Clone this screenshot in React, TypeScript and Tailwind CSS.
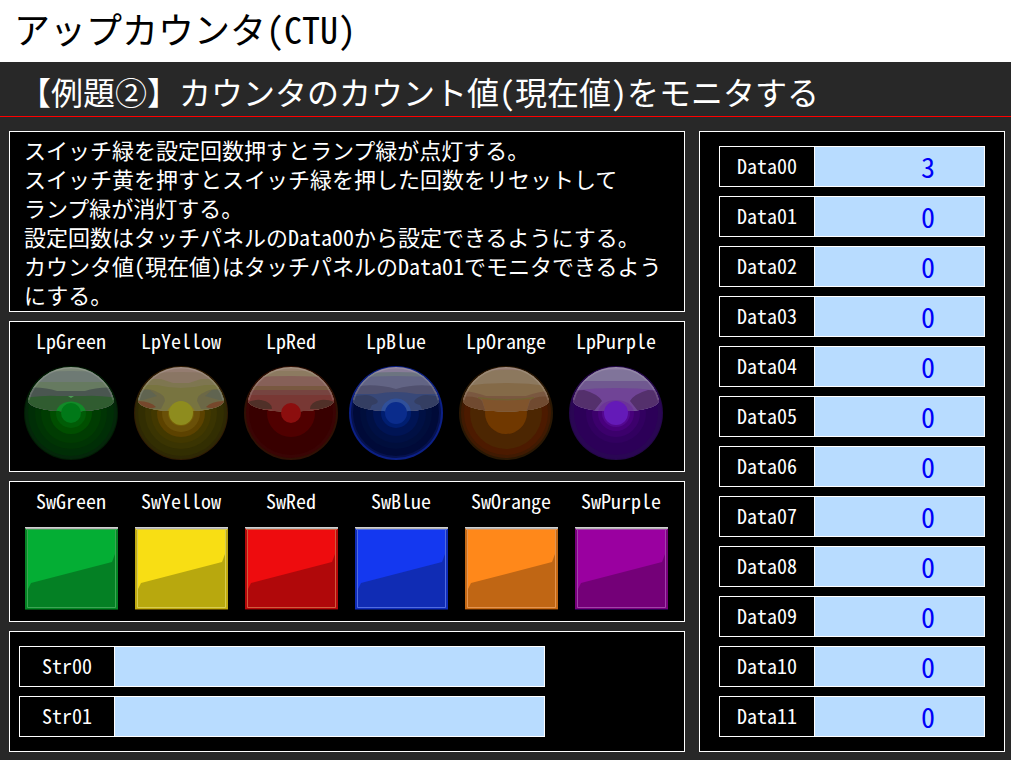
import { ReactNode, useState } from "react";

const description = [
  "スイッチ緑を設定回数押すとランプ緑が点灯する。",
  "スイッチ黄を押すとスイッチ緑を押した回数をリセットして",
  "ランプ緑が消灯する。",
  "設定回数はタッチパネルのData00から設定できるようにする。",
  "カウンタ値(現在値)はタッチパネルのData01でモニタできるようにする。",
];

type Ring = [radius: number, color: string];
type Band = [path: string, color: string];

type LampSpec = {
  name: string;
  width: string;
  rings: Ring[];
  bands: Band[];
  core: Ring;
};

// rings go from the outside in, bands are the reflections on the upper half
const lamps: LampSpec[] = [
  {
    name: "LpGreen",
    width: "w-[110px]",
    rings: [[47, "#021c04"], [46, "#04260a"], [43, "#002e06"], [36, "#003404"], [30, "#003c02"], [21, "#004e00"], [15, "#005c06"]],
    bands: [
      ["M0 0H96V48H0Z", "#7c8878"],
      ["M0 8Q48 4 96 8V48H0Z", "#6e7a74"],
      ["M0 17H96V48H0Z", "#667a60"],
      ["M0 23Q20 21 34 26H62Q76 21 96 23V48H0Z", "#4a5650"],
      ["M0 33Q22 30 34 31H62Q74 30 96 33V48H0Z", "#305c30"],
      ["M33 47C36 33 60 33 63 47Z", "#128a28"],
      ["M45 31H51L48 33Z", "#4c9c54"],
    ],
    core: [10, "#007818"],
  },
  {
    name: "LpYellow",
    width: "w-[110px]",
    rings: [[47, "#301c04"], [46, "#2e2804"], [43, "#322e02"], [36, "#3a3402"], [30, "#423800"], [24, "#5c4200"], [19, "#6a5008"], [13, "#786008"]],
    bands: [
      ["M0 0H96V48H0Z", "#947c70"],
      ["M0 9Q48 5 96 9V48H0Z", "#8a7664"],
      ["M0 14H28L40 18H56L68 14H96V48H0Z", "#7e7650"],
      ["M0 20H24Q48 26 72 20H96V48H0Z", "#787440"],
      ["M0 25Q17 22 24 27Q32 30 32 36L28 44H0ZM96 25Q79 22 72 27Q64 30 64 36L68 44H96Z", "#6c6846"],
      ["M0 32Q7 23 17 25L24 31L10 35H0ZM96 32Q89 23 79 25L72 31L86 35H96Z", "#606450"],
      ["M0 36Q17 35 23 42Q20 44 0 44ZM96 36Q79 35 73 42Q76 44 96 44Z", "#76482c"],
      ["M34 47C36 36 60 36 62 47Z", "#8a7c24"],
    ],
    core: [12, "#8e8c1e"],
  },
  {
    name: "LpRed",
    width: "w-[110px]",
    rings: [[47, "#301004"], [45, "#3a0404"], [42, "#380000"], [24, "#500000"]],
    bands: [
      ["M0 0H96V48H0Z", "#96806c"],
      ["M0 6H96V48H0Z", "#8c7a60"],
      ["M0 13Q48 9 96 13V48H0Z", "#866058"],
      ["M0 21H96V48H0Z", "#785840"],
      ["M0 25H96V48H0Z", "#764440"],
      ["M0 30H96V48H0Z", "#783834"],
      ["M0 40Q8 34 18 35Q29 37 29 44H0ZM96 40Q88 34 78 35Q67 37 67 44H96Z", "#503028"],
    ],
    core: [10, "#8c0e0e"],
  },
  {
    name: "LpBlue",
    width: "w-[100px]",
    rings: [[47, "#0c2086"], [45, "#06124e"], [43, "#000a38"], [36, "#000e3c"], [30, "#001044"], [23, "#001454"], [15, "#001e70"]],
    bands: [
      ["M0 0H96V48H0Z", "#887c98"],
      ["M0 9Q48 5 96 9V48H0Z", "#6c7480"],
      ["M0 13Q48 9 96 13V48H0Z", "#626484"],
      ["M0 23Q24 17 48 24Q72 17 96 23V48H0Z", "#50506e"],
      ["M0 29H28Q48 25 68 29H96V48H0Z", "#384878"],
      ["M0 33Q18 28 23 31Q36 37 24 40L20 48H0ZM96 33Q78 28 73 31Q60 37 72 40L76 48H96Z", "#343e62"],
      ["M33 47C35 29 61 29 63 47Z", "#30509a"],
    ],
    core: [11, "#0a2c8c"],
  },
  {
    name: "LpOrange",
    width: "w-[120px]",
    rings: [[47, "#2a1804"], [45, "#401a02"], [42, "#4c1a00"], [36, "#4c2602"], [21, "#703800"]],
    bands: [
      ["M0 0H96V48H0Z", "#92786c"],
      ["M0 7Q48 3 96 7V48H0Z", "#8c785e"],
      ["M0 22Q48 14 96 22V48H0Z", "#846a48"],
      ["M0 26Q12 25 28 31H68Q84 25 96 26V48H0Z", "#7a5840"],
      ["M20 32Q48 36 76 32V34Q48 37 20 34Z", "#706030"],
      ["M0 32Q20 30 24 36L28 48H0ZM96 32Q76 30 72 36L68 48H96Z", "#704a30"],
      ["M24 34Q48 37 72 34L68 48H28Z", "#80542c"],
    ],
    core: [0, "#703800"],
  },
  {
    name: "LpPurple",
    width: "w-[100px]",
    rings: [[47, "#240848"], [46, "#2a0654"], [42, "#2c0058"], [30, "#320060"], [24, "#3c006c"], [18, "#48007c"], [14, "#540890"]],
    bands: [
      ["M0 0H96V48H0Z", "#8878a0"],
      ["M0 8Q48 2 96 8V48H0Z", "#80749a"],
      ["M0 16H96V48H0Z", "#705890"],
      ["M0 26Q48 20 96 26V48H0Z", "#704496"],
      ["M0 26L16 25Q30 29 34 36L26 46H0ZM96 26L80 25Q66 29 62 36L70 46H96Z", "#54306c"],
      ["M30 47C32 31 64 31 66 47Z", "#6c3498"],
    ],
    core: [12, "#641ab8"],
  },
];

const switches = [
  { name: "SwGreen", light: "#04ae34", dark: "#048024", edge: "#048424", line: "#3ca454", bottom: "#004c10" },
  { name: "SwYellow", light: "#f8de14", dark: "#b8a80e", edge: "#c0aa10", line: "#d8cc50", bottom: "#5c4800" },
  { name: "SwRed", light: "#ee0c0e", dark: "#b0080a", edge: "#b4080a", line: "#d05c3c", bottom: "#4c0000" },
  { name: "SwBlue", light: "#1438f0", dark: "#102cb4", edge: "#102cb8", line: "#506ce0", bottom: "#041464" },
  { name: "SwOrange", light: "#ff881a", dark: "#c06614", edge: "#c46814", line: "#e49450", bottom: "#502400" },
  { name: "SwPurple", light: "#9a00a0", dark: "#740078", edge: "#78007c", line: "#a044a8", bottom: "#240048" },
];

const Panel = ({ className, children }: { className?: string; children: ReactNode }) => (
  <section className={`border border-white bg-black ${className ?? ""}`}>{children}</section>
);

const GLOSS = "M5 35A44.500 44.500 0 0 1 91 35C91 43 70 46.500 48 46.500S5 43 5 35Z";

const Lamp = ({ lamp }: { lamp: LampSpec }) => {
  const { name, rings, bands, core } = lamp;
  return (
    <svg className="size-24" viewBox="0 0 96 96" role="img" aria-label={name}>
      <defs>
        <clipPath id={`gloss-${name}`}>
          <path d={GLOSS} />
        </clipPath>
      </defs>
      {rings.map(([r, color]) => (
        <circle key={r} cx="48" cy="48" r={r} fill={color} />
      ))}
      <g clipPath={`url(#gloss-${name})`}>
        {bands.map(([path, color]) => (
          <path key={path} d={path} fill={color} />
        ))}
        <path d="M5 35A44.500 44.500 0 0 1 91 35" fill="none" stroke="#d8d0d0" strokeOpacity="0.2" strokeWidth="3" />
      </g>
      <circle cx="48" cy="48" r={core[0]} fill={core[1]} />
    </svg>
  );
};

const SwitchFace = ({ sw }: { sw: (typeof switches)[number] }) => (
  <svg className="block" width="93" height="83" viewBox="0 0 93 83" aria-hidden="true">
    <path d="M0 0H93V83H0Z" fill={sw.edge} />
    <path d="M3 3H90V80H3Z" fill={sw.light} />
    <path d="M3 80V62L6 56L87 35L90 27V80Z" fill={sw.dark} />
    <path d="M2.500 3V80.500H90.500V3" fill="none" stroke={sw.line} />
    <path d="M0 0H93V1H0Z" fill="#d0d0d0" />
    <path d="M0 1H93V2H1Z" fill="#b4b4b4" />
    <path d="M1 2H92V3H1Z" fill={sw.line} />
    <path d="M0 82H93V83H0Z" fill={sw.bottom} />
  </svg>
);

const Field = ({ label, value, onChange }: { label: string; value: string; onChange: (v: string) => void }) => (
  <div className="flex h-[41px] border border-white">
    <label
      htmlFor={label}
      className="flex w-[95px] shrink-0 items-center justify-center border-r border-white pb-0.5 text-xl"
    >
      {label}
    </label>
    <input
      id={label}
      value={value}
      onChange={(e) => onChange(e.target.value)}
      className="h-full w-full min-w-0 bg-[#b8dcff] pr-[49px] pb-0.5 text-right text-[28px] text-[#0000f8] outline-none"
    />
  </div>
);

const App = () => {
  const [data, setData] = useState(["3", ...Array<string>(11).fill("0")]);
  const [strings, setStrings] = useState(["", ""]);

  const replaceAt = (list: string[], index: number, value: string) =>
    list.map((item, i) => (i === index ? value : item));

  return (
    <div className="min-h-screen bg-[#282828] font-['Noto_Sans_CJK_JP',sans-serif] text-white [font-feature-settings:'hwid']">
      <header>
        <h1 className="h-[62px] bg-white pl-[14px] text-4xl leading-[56px] text-black">アップカウンタ(CTU)</h1>
        <h2 className="h-[55px] border-b border-[#ff0000] pl-[19px] text-[32px] leading-[58px]">
          【例題②】カウンタのカウント値(現在値)をモニタする
        </h2>
      </header>

      <main className="grid grid-cols-[minmax(0,1fr)_306px] gap-[14px] pt-[14px] pr-[6px] pb-2 pl-[9px]">
        <div className="flex flex-col gap-[9px]">
          <Panel className="px-[14px] pt-[3px] pb-[2px] text-[22px] leading-[29px]">
            {description.map((line) => (
              <p key={line}>{line}</p>
            ))}
          </Panel>

          {/* Lamps */}
          <Panel className="flex h-[151px] px-[6px] pt-[3px]">
            {lamps.map((lamp) => (
              <div key={lamp.name} className={`flex flex-col items-center gap-2 ${lamp.width}`}>
                <span className="text-xl leading-8">{lamp.name}</span>
                <Lamp lamp={lamp} />
              </div>
            ))}
          </Panel>

          {/* Switches */}
          <Panel className="flex h-[141px] px-[6px] pt-[3px]">
            {switches.map((sw) => (
              <button key={sw.name} type="button" className="flex w-[110px] flex-col items-center gap-[10px]">
                <span className="text-xl leading-8">{sw.name}</span>
                <SwitchFace sw={sw} />
              </button>
            ))}
          </Panel>

          <Panel className="flex h-[121px] flex-col gap-[9px] py-[14px] pr-[139px] pl-[9px]">
            {strings.map((value, i) => (
              <Field
                key={i}
                label={`Str0${i}`}
                value={value}
                onChange={(v) => setStrings(replaceAt(strings, i, v))}
              />
            ))}
          </Panel>
        </div>

        {/* Data registers */}
        <Panel className="flex flex-col gap-[9px] px-[19px] py-[14px]">
          {data.map((value, i) => (
            <Field
              key={i}
              label={`Data${String(i).padStart(2, "0")}`}
              value={value}
              onChange={(v) => setData(replaceAt(data, i, v))}
            />
          ))}
        </Panel>
      </main>
    </div>
  );
};

export default App;
